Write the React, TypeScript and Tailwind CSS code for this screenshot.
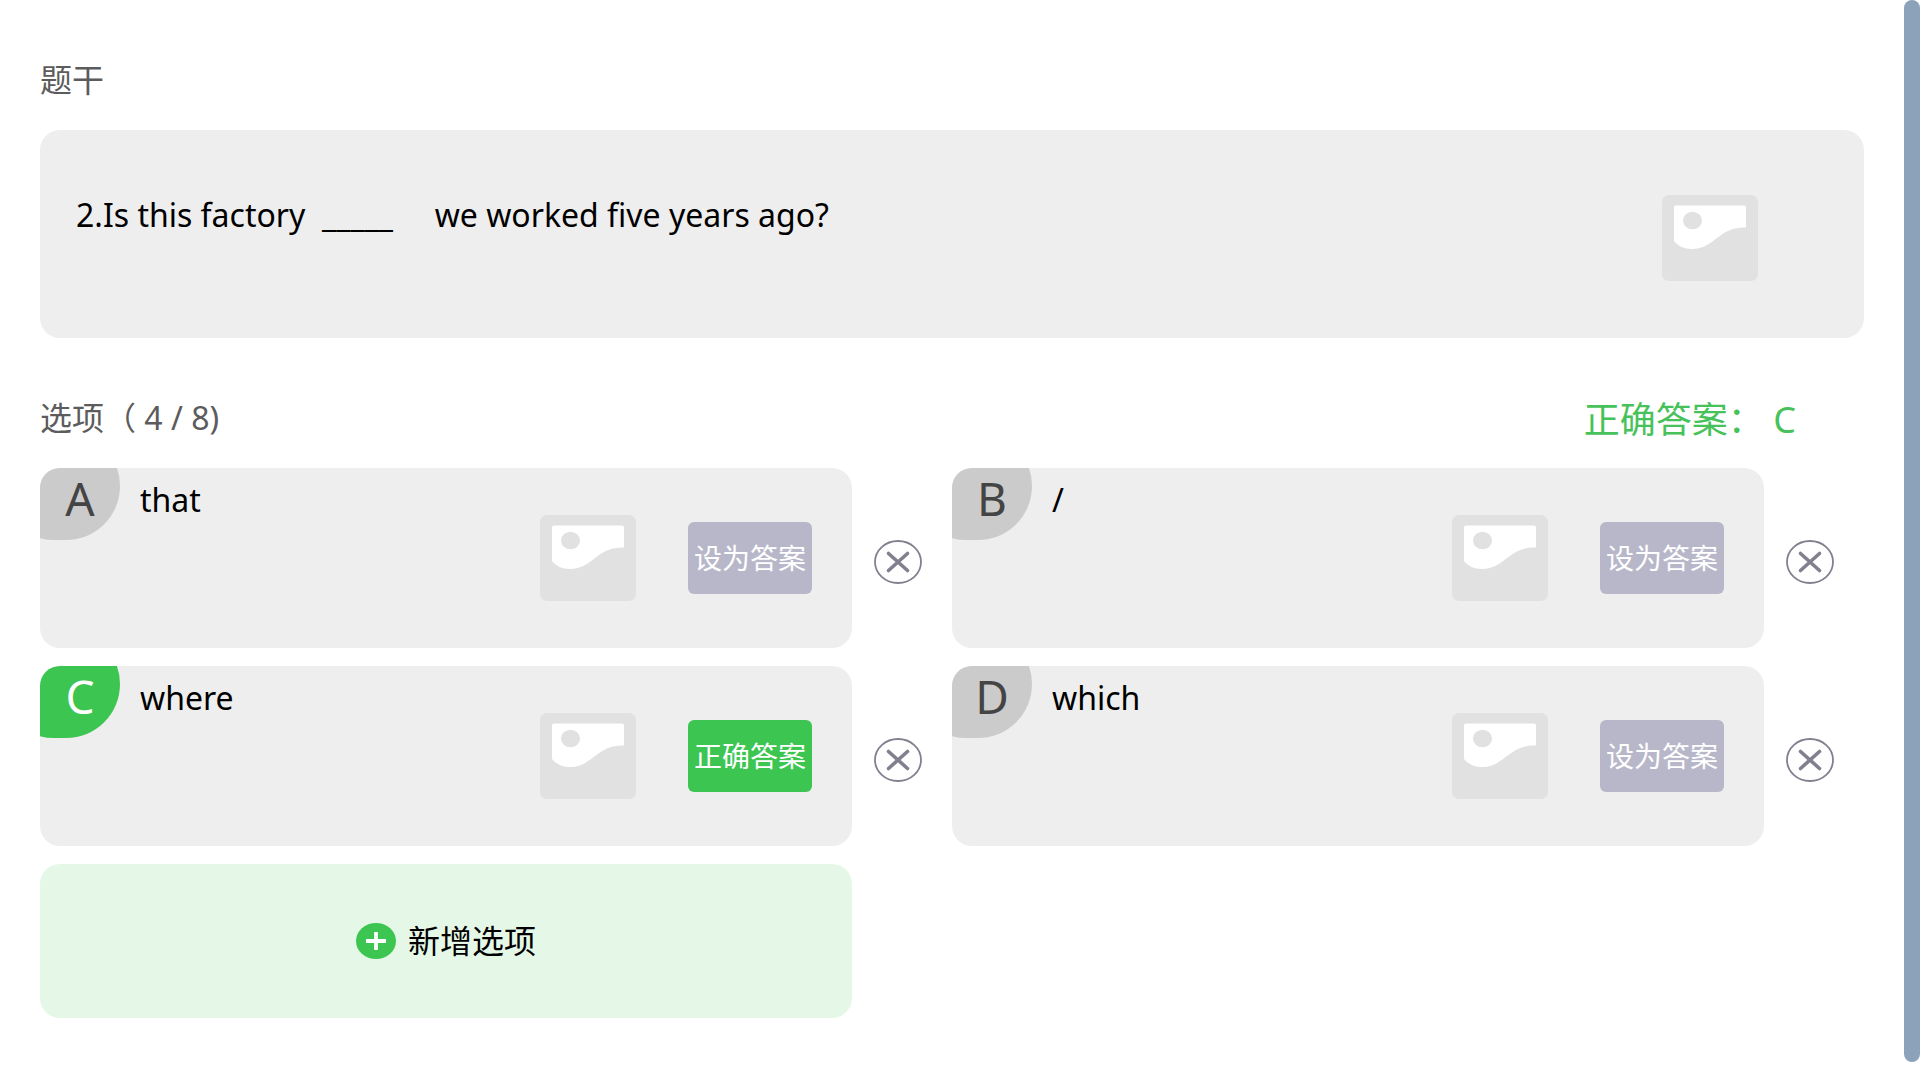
import { useState } from 'react'

interface Option {
  id: number
  text: string
}

const MAX_OPTIONS = 8
const LETTERS = 'ABCDEFGH'

const INITIAL_OPTIONS: Option[] = [
  { id: 1, text: 'that' },
  { id: 2, text: '/' },
  { id: 3, text: 'where' },
  { id: 4, text: 'which' },
]

function ImageButton({ label }: { label: string }) {
  return (
    <button aria-label={label} className="shrink-0">
      <svg width="96" height="86" viewBox="0 0 96 86" className="block">
        <rect width="96" height="86" rx="7" fill="#e1e1e1" />
        <path
          d="M14 10.5H82Q84 10.5 84 12.5V32.5C72 32 64 36 55 43C46 50 40 54 30 54C22 54 16 51 12 46V12.5Q12 10.5 14 10.5Z"
          fill="#ffffff"
        />
        <ellipse cx="30.5" cy="25.5" rx="9.5" ry="8.8" fill="#e1e1e1" />
      </svg>
    </button>
  )
}

interface OptionCardProps {
  letter: string
  text: string
  isAnswer: boolean
  onChange: (text: string) => void
  onSetAnswer: () => void
  onRemove: () => void
}

function OptionCard({ letter, text, isAnswer, onChange, onSetAnswer, onRemove }: OptionCardProps) {
  return (
    <div className="flex items-center">
      <div className="relative flex h-[180px] min-w-0 flex-1 items-center overflow-hidden rounded-[20px] bg-[#eeeeee] pr-10">
        {/* Corner badge, clipped by the card */}
        <div
          className={`absolute -left-10 -top-9 h-[108px] w-[120px] rounded-full ${isAnswer ? 'bg-[#3cc551]' : 'bg-[#cbcbcb]'}`}
        />
        <span
          className={`relative w-20 self-start pt-1 text-center text-[46px] leading-[52px] ${isAnswer ? 'text-white' : 'text-[#444444]'}`}
        >
          {letter}
        </span>
        <input
          aria-label={`选项 ${letter}`}
          value={text}
          onChange={e => onChange(e.target.value)}
          className="ml-5 mt-3 h-10 min-w-0 flex-1 self-start bg-transparent text-[32px] leading-10 text-black outline-none"
        />
        <ImageButton label={`选项 ${letter} 图片`} />
        <button
          onClick={onSetAnswer}
          className={`ml-[52px] h-[72px] w-[124px] shrink-0 whitespace-nowrap rounded-md text-center text-[28px] leading-10 text-white ${isAnswer ? 'bg-[#3cc551]' : 'bg-[#b8b7c9]'}`}
        >
          {isAnswer ? '正确答案' : '设为答案'}
        </button>
      </div>
      <div className="flex w-[100px] shrink-0 pl-[22px] pt-2">
        <button aria-label={`删除选项 ${letter}`} onClick={onRemove}>
          <svg width="48" height="44" viewBox="0 0 48 44" className="block" fill="none" stroke="#81808f">
            <ellipse cx="24" cy="22" rx="23" ry="21" strokeWidth="1.8" />
            <path d="M14.5 13.5L33.5 30.5M33.5 13.5L14.5 30.5" strokeWidth="3.6" strokeLinecap="round" />
          </svg>
        </button>
      </div>
    </div>
  )
}

export default function App() {
  const [question, setQuestion] = useState('2.Is this factory  _____     we worked five years ago?')
  const [options, setOptions] = useState(INITIAL_OPTIONS)
  const [answerId, setAnswerId] = useState(3)

  const answerIndex = options.findIndex(o => o.id === answerId)

  function updateOption(id: number, text: string) {
    setOptions(list => list.map(o => (o.id === id ? { ...o, text } : o)))
  }

  function addOption() {
    if (options.length >= MAX_OPTIONS) return
    setOptions(list => [...list, { id: Date.now(), text: '' }])
  }

  return (
    <div className="flex min-h-screen bg-white font-['Noto_Sans','Noto_Sans_CJK_SC',sans-serif]">
      <main className="min-w-0 flex-1 px-10 pb-10 pt-[60px]">
        <label htmlFor="question" className="block text-[32px] leading-10 text-[#5c5c5c]">
          题干
        </label>
        <div className="mt-[30px] flex h-[208px] rounded-[20px] bg-[#eeeeee] pl-9 pr-[106px] pt-[65px]">
          <textarea
            id="question"
            value={question}
            onChange={e => setQuestion(e.target.value)}
            className="h-[120px] min-w-0 flex-1 resize-none bg-transparent text-[32px] leading-10 text-black outline-none"
          />
          <div>
            <ImageButton label="题干图片" />
          </div>
        </div>

        <div className="mt-[60px] flex justify-between leading-10">
          <h2 className="text-[32px] text-[#5c5c5c]">
            选项（ {options.length} / {MAX_OPTIONS})
          </h2>
          <p className="pr-[68px] text-[36px] leading-[44px] text-[#47c25a]">
            正确答案： {answerIndex >= 0 ? LETTERS[answerIndex] : ''}
          </p>
        </div>

        <div className="mt-[26px] grid grid-cols-2 gap-y-[18px]">
          {options.map((option, i) => (
            <OptionCard
              key={option.id}
              letter={LETTERS[i]}
              text={option.text}
              isAnswer={option.id === answerId}
              onChange={text => updateOption(option.id, text)}
              onSetAnswer={() => setAnswerId(option.id)}
              onRemove={() => setOptions(list => list.filter(o => o.id !== option.id))}
            />
          ))}
          <div className="pr-[100px]">
            <button
              onClick={addOption}
              className="flex h-[154px] w-full items-center justify-center gap-3 rounded-[20px] bg-[#e5f8e8] text-[32px] leading-10 text-black"
            >
              <svg width="40" height="36" viewBox="0 0 40 36">
                <ellipse cx="20" cy="18" rx="20" ry="18" fill="#3cc551" />
                <path d="M10 18H30M20 9V27" stroke="#ffffff" strokeWidth="3.8" />
              </svg>
              新增选项
            </button>
          </div>
        </div>
      </main>

      {/* Scroll thumb */}
      <div className="h-[calc(100vh-18px)] w-4 shrink-0 rounded-full bg-[#8ca2ba]" />
    </div>
  )
}
